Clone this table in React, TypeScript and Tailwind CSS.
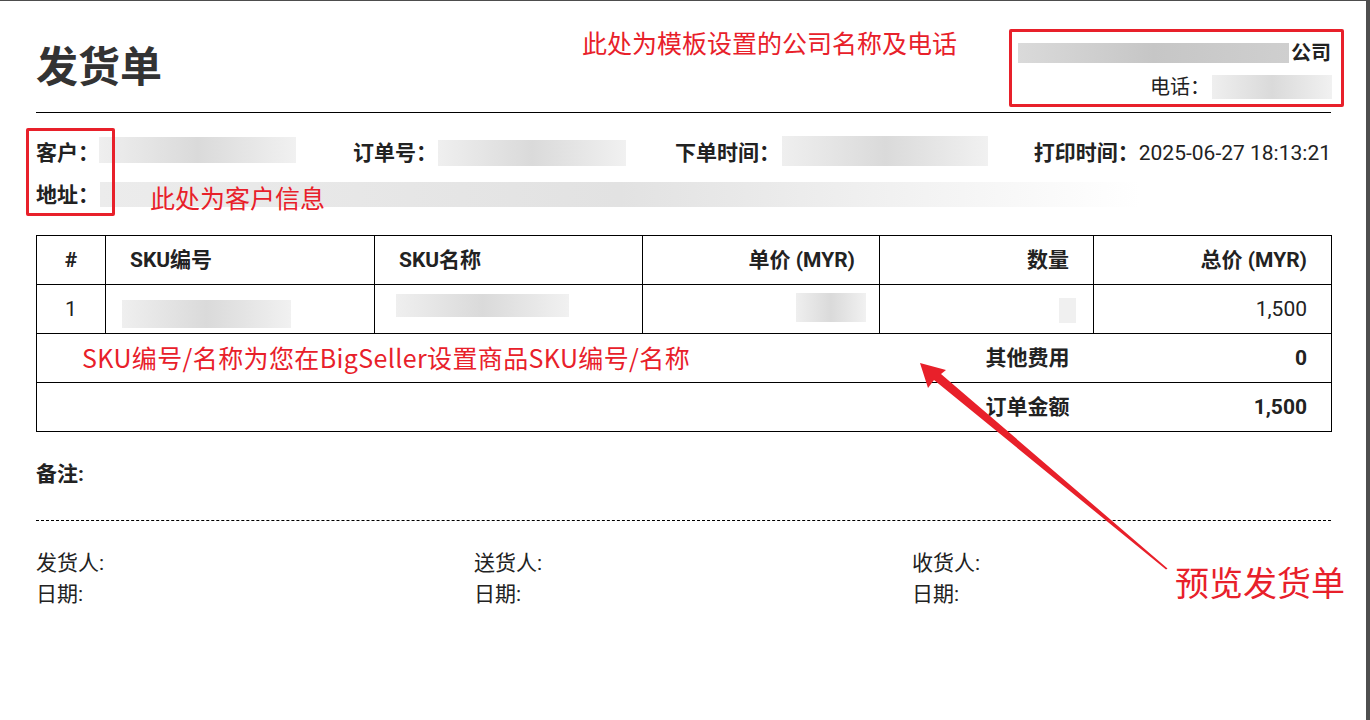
import React from "react";

type Tone = "light" | "dark" | "faint";

const toneClass: Record<Tone, string> = {
  light: "bg-linear-to-r from-[#efefef] via-[#dadada] to-[#f1f1f1]",
  dark: "bg-linear-to-r from-[#dadada] via-[#c6c6c6] to-[#cfcfcf]",
  faint: "bg-[#f0f0f0]",
};

const Blur: React.FC<{ className?: string; tone?: Tone }> = ({ className = "", tone = "light" }) => (
  <div className={`shrink-0 ${toneClass[tone]} ${className}`} />
);

const cell = "border border-black px-[24px]";

const App: React.FC = () => {
  return (
    <div
      className="relative flex w-[1370px] h-[720px] overflow-hidden bg-white text-[#222]"
      style={{ fontFamily: "Roboto, 'Noto Sans CJK SC', sans-serif" }}
    >
      <main className="w-[1366px] h-full border-t border-[#4d4d4d] pl-[36px] pr-[35px]">
        {/* header */}
        <header className="flex items-start justify-between border-b border-black pt-[35px] pb-[8px]">
          <h1 className="mt-[4px] text-[42px] leading-[56px] font-bold text-[#333]">发货单</h1>
          <div className="flex flex-col items-end text-[20px] leading-[34px]">
            <div className="flex items-center">
              <Blur tone="dark" className="w-[271px] h-[20px] mr-[2px]" />
              <span className="font-bold">公司</span>
            </div>
            <div className="flex items-center">
              <span>电话：</span>
              <Blur className="ml-[2px] -mr-[1px] w-[120px] h-[24px]" />
            </div>
          </div>
        </header>

        {/* order info */}
        <section className="pt-[25px] text-[21px] leading-[30px]">
          <div className="flex whitespace-nowrap">
            <div className="flex w-[317px] shrink-0 items-center">
              <span className="font-bold">客户：</span>
              <Blur className="w-[197px] h-[26px] -mt-[6px]" />
            </div>
            <div className="flex w-[322px] shrink-0 items-center">
              <span className="font-bold">订单号：</span>
              <Blur className="ml-[1px] w-[188px] h-[26px]" />
            </div>
            <div className="flex items-center">
              <span className="font-bold">下单时间：</span>
              <Blur className="ml-[2px] w-[206px] h-[30px] -mt-[4px]" />
            </div>
            <div className="ml-auto flex shrink-0 items-center">
              <span className="font-bold">打印时间：</span>
              <span>2025-06-27 18:13:21</span>
            </div>
          </div>
          <div className="mt-[12px] flex items-center">
            <span className="font-bold">地址：</span>
            <div className="ml-[1px] w-[1040px] h-[25px] -mt-[2px] bg-linear-to-r from-[#ececec] via-[#e2e2e2] to-white" />
          </div>
        </section>

        {/* items */}
        <table className="mt-[25px] w-full table-fixed border-collapse text-[21px] leading-[30px]">
          <colgroup>
            <col className="w-[69px]" />
            <col className="w-[269px]" />
            <col className="w-[268px]" />
            <col className="w-[237px]" />
            <col className="w-[214px]" />
            <col className="w-[238px]" />
          </colgroup>
          <thead>
            <tr className="h-[49px] font-bold">
              <th className="border border-black text-center">#</th>
              <th className={`${cell} text-left`}>SKU编号</th>
              <th className={`${cell} text-left`}>SKU名称</th>
              <th className={`${cell} text-right`}>单价 (MYR)</th>
              <th className={`${cell} text-right`}>数量</th>
              <th className={`${cell} text-right`}>总价 (MYR)</th>
            </tr>
          </thead>
          <tbody>
            <tr className="h-[49px]">
              <td className="border border-black text-center">1</td>
              <td className="border border-black p-0 align-top">
                <Blur className="ml-[16px] mt-[15px] w-[169px] h-[28px]" />
              </td>
              <td className="border border-black p-0 align-top">
                <Blur className="ml-[21px] mt-[9px] w-[173px] h-[23px]" />
              </td>
              <td className="border border-black p-0 align-top">
                <div className="flex justify-end pr-[13px] pt-[8px]">
                  <Blur className="w-[70px] h-[29px]" />
                </div>
              </td>
              <td className="border border-black p-0 align-top">
                <div className="flex justify-end pr-[17px] pt-[13px]">
                  <Blur tone="faint" className="w-[17px] h-[25px]" />
                </div>
              </td>
              <td className={`${cell} text-right`}>1,500</td>
            </tr>
            <tr className="h-[49px] font-bold">
              <td colSpan={5} className="border-y border-l border-black px-[24px] text-right">其他费用</td>
              <td className="border-y border-r border-black px-[24px] text-right">0</td>
            </tr>
            <tr className="h-[49px] font-bold">
              <td colSpan={5} className="border-y border-l border-black px-[24px] text-right">订单金额</td>
              <td className="border-y border-r border-black px-[24px] text-right">1,500</td>
            </tr>
          </tbody>
        </table>

        {/* remarks + signatures */}
        <div className="mt-[27px] text-[21px] leading-[30px] font-bold">备注:</div>
        <div className="mt-[31px] border-t border-dashed border-black" />
        <div className="mt-[27px] grid grid-cols-[438px_438px_1fr] text-[21px] leading-[31px]">
          <div>
            <div>发货人:</div>
            <div>日期:</div>
          </div>
          <div>
            <div>送货人:</div>
            <div>日期:</div>
          </div>
          <div>
            <div>收货人:</div>
            <div>日期:</div>
          </div>
        </div>
      </main>
      <div className="w-[4px] h-full bg-[#4f4f4f]" />

      {/* annotations drawn over the preview */}
      <div
        className="pointer-events-none absolute inset-0 text-[#e8202a]"
        style={{ fontFamily: "'Noto Sans CJK SC', sans-serif" }}
      >
        <div className="absolute left-[582px] top-[27px] text-[25px] leading-[30px]">此处为模板设置的公司名称及电话</div>
        <div className="absolute left-[1009px] top-[29px] w-[335px] h-[78px] rounded-[2px] border-[3px] border-[#e8202a]" />
        <div className="absolute left-[26px] top-[128px] w-[89px] h-[88px] rounded-[2px] border-[3px] border-[#e8202a]" />
        <div className="absolute left-[150px] top-[182px] text-[25px] leading-[30px]">此处为客户信息</div>
        <div className="absolute left-[82px] top-[342px] text-[25px] leading-[30px] tracking-[0.38px]">SKU编号/名称为您在BigSeller设置商品SKU编号/名称</div>
        <div className="absolute left-[1175px] top-[562px] text-[34px] leading-[40px]">预览发货单</div>
        <svg className="absolute left-0 top-0" width="1370" height="720" viewBox="0 0 1370 720">
          <polygon
            points="920,363 946,370 941,374 1167.5,568.5 1166,569.5 934,380 928,388"
            fill="#e8202a"
          />
        </svg>
      </div>
    </div>
  );
};

export default App;
